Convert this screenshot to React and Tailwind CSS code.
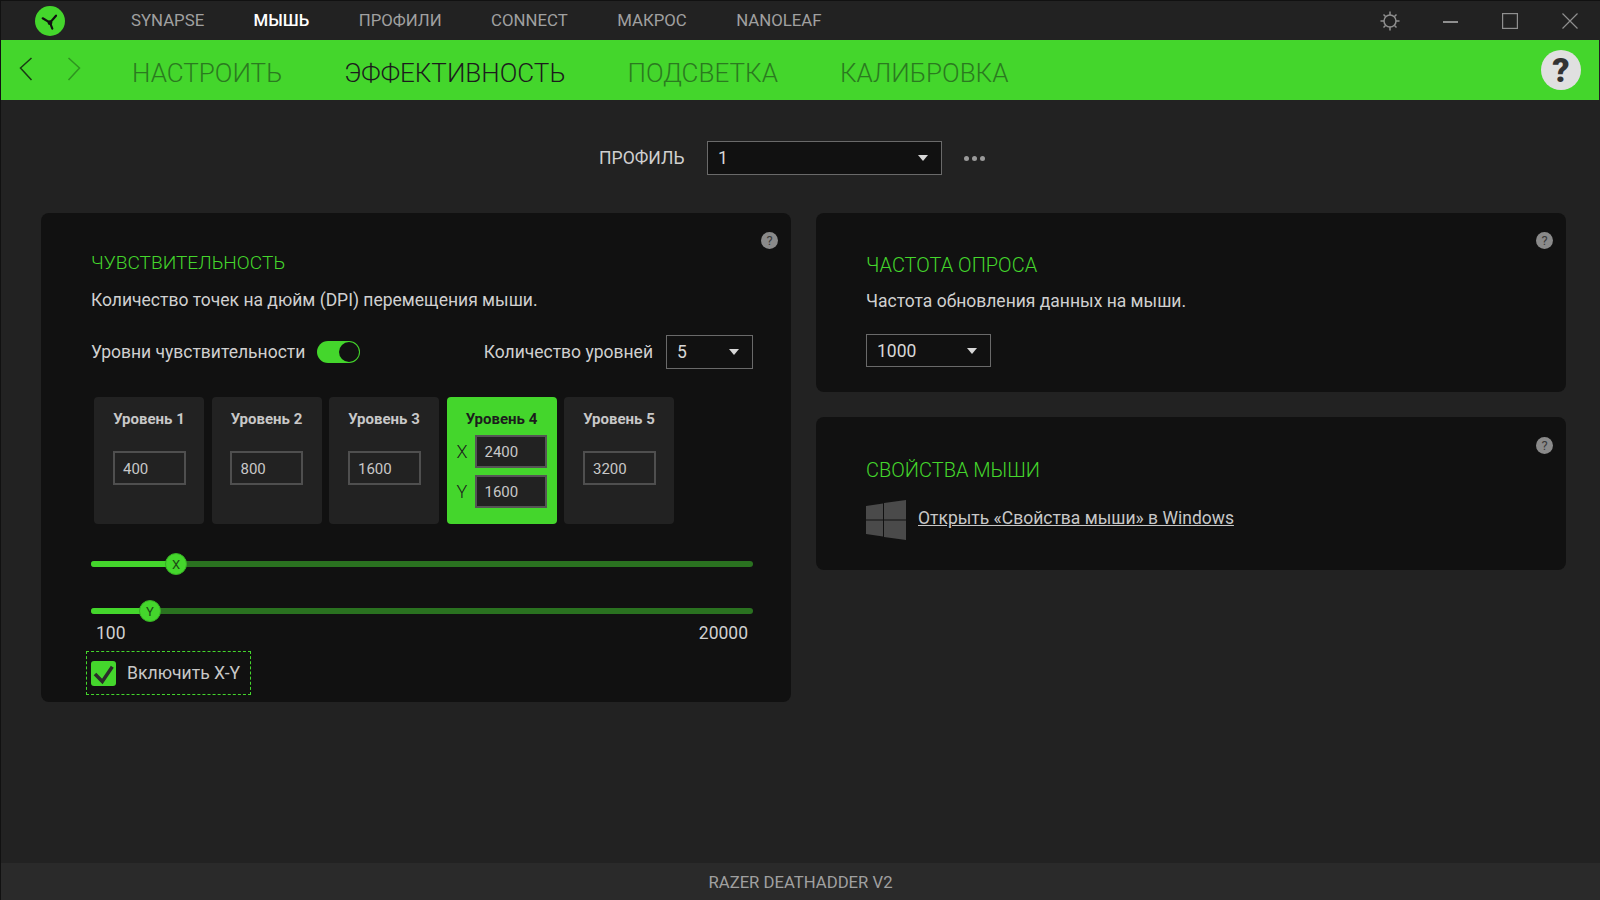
const NAV = ["SYNAPSE", "МЫШЬ", "ПРОФИЛИ", "CONNECT", "МАКРОС", "NANOLEAF"];
const SUB = ["НАСТРОИТЬ", "ЭФФЕКТИВНОСТЬ", "ПОДСВЕТКА", "КАЛИБРОВКА"];

function Caret({ className = "" }) {
  return (
    <svg width="10" height="6" viewBox="0 0 10 6" className={className}>
      <polygon points="0,0 10,0 5,6" fill="#d8d8d8" />
    </svg>
  );
}

function HelpDot({ className = "top-[19px]" }) {
  return (
    <span className={"absolute right-[13px] w-[17px] h-[17px] rounded-full bg-[#8a8a8a] text-[#3a3a3a] text-[13px] leading-[17px] text-center " + className}>
      ?
    </span>
  );
}

function Select({ value, className = "" }) {
  return (
    <div className={"flex items-center justify-between border border-[#6a6a6a] bg-[#111] text-[#d8d8d8] text-[17.5px] " + className}>
      <span className="pt-[1px]">{value}</span>
      <Caret />
    </div>
  );
}

function Level({ n, value }) {
  return (
    <div className="w-[110px] h-[127px] rounded-[4px] bg-[#222] flex flex-col items-center pt-[13px]">
      <div className="text-[15px] leading-[18px] font-bold text-[#c8c8c8]">Уровень {n}</div>
      <div className="mt-[23px] w-[73px] h-[34px] border-2 border-[#4f4f4f] text-[15px] leading-[32px] pl-[8.5px] text-[#c8c8c8]">{value}</div>
    </div>
  );
}

function XYInput({ label, value }) {
  return (
    <div className="flex items-center h-[33px]">
      <span className="w-[28px] pl-[10px] text-[18px] font-light text-[#1c1c1c]">{label}</span>
      <div className="w-[72px] h-[33px] bg-[#222] border-2 border-[#555] text-[15px] leading-[31px] pl-[8px] text-[#c8c8c8]">{value}</div>
    </div>
  );
}

function Slider({ letter, fill, className = "" }) {
  return (
    <div className={"relative h-[6px] rounded-full bg-[#2a7220] " + className}>
      <div className="h-[6px] rounded-full bg-[#44d62c]" style={{ width: fill }} />
      <div
        className="absolute top-[-8px] w-[22px] h-[22px] -ml-[11px] rounded-full bg-[#44d62c] border border-[#37b024] text-[#1c4a15] text-[13px] leading-[21px] text-center"
        style={{ left: fill }}
      >
        {letter}
      </div>
    </div>
  );
}

export default function App() {
  return (
    <div className="w-[1600px] h-[900px] overflow-hidden bg-[#222] text-[#d8d8d8] border-l border-t border-[#111] flex flex-col font-['Roboto',sans-serif]">
      <header className="h-[39px] flex items-center shrink-0">
        <svg width="30" height="30" viewBox="0 0 30 30" className="ml-[34px]">
          <circle cx="15" cy="15" r="15" fill="#44d62c" />
          <path d="M7.7 12.3L15 16.7L21 9.7M15 16.7L17.3 22.7" stroke="#111" strokeWidth="2.2" fill="none" strokeLinecap="round" />
          <circle cx="15" cy="16.7" r="2.4" fill="#111" />
        </svg>
        <nav className="ml-[66px] flex gap-[49.4px] text-[16.8px]">
          {NAV.map((n) => (
            <span key={n} className={n === "МЫШЬ" ? "text-white font-medium" : "text-[#a0a0a0]"}>{n}</span>
          ))}
        </nav>
        <div className="ml-auto flex items-center">
          <svg width="20" height="20" viewBox="0 0 20 20" fill="none" stroke="#8f8f8f" strokeWidth="1.5">
            <circle cx="10" cy="10" r="6" />
            <path d="M10 0.5V4M10 16V19.5M0.5 10H4M16 10H19.5M3.5 3.5L5.5 5.5M16.5 3.5L14.5 5.5M3.5 16.5L5.5 14.5M16.5 16.5L14.5 14.5" />
          </svg>
          <svg width="15" height="15" viewBox="0 0 15 15" className="ml-[43px]">
            <rect x="0" y="8" width="15" height="2" fill="#8f8f8f" />
          </svg>
          <svg width="16" height="16" viewBox="0 0 16 16" className="ml-[44px]" fill="none" stroke="#8f8f8f" strokeWidth="1.2">
            <rect x="0.6" y="0.6" width="14.8" height="14.8" />
          </svg>
          <svg width="16" height="16" viewBox="0 0 16 16" className="ml-[44px] mr-[22px]" fill="none" stroke="#8f8f8f" strokeWidth="1.2">
            <path d="M0.5 0.5L15.5 15.5M15.5 0.5L0.5 15.5" />
          </svg>
        </div>
      </header>

      <div className="h-[60px] shrink-0 bg-[#44d62c] mr-[1px] flex items-center">
        <svg width="14" height="24" viewBox="0 0 14 24" fill="none" stroke="#1a3a14" strokeWidth="1.5" className="ml-[18px] -mt-[2px]">
          <path d="M12.5 1L1.5 11L12.5 23" />
        </svg>
        <svg width="14" height="24" viewBox="0 0 14 24" fill="none" stroke="#2f9420" strokeWidth="1.5" className="ml-[34px] -mt-[2px]">
          <path d="M1.5 1L12.5 11L1.5 23" />
        </svg>
        <nav className="ml-[51px] pt-[7px] flex gap-[62px] text-[26px] font-light">
          {SUB.map((s) => (
            <span key={s} className={s === "ЭФФЕКТИВНОСТЬ" ? "text-[#1c1c1c]" : "text-[#2b7a20]"}>{s}</span>
          ))}
        </nav>
        <div className="ml-auto mr-[18px] -mt-[1px] w-[40px] h-[40px] rounded-full bg-[#e0e0e0] text-[#333] text-[34px] font-black leading-[40px] text-center">?</div>
      </div>

      <main className="flex-1 min-h-0 pt-[41px]">
        <div className="flex items-center h-[34px] pl-[598px]">
          <span className="w-[108px] text-[17.6px] text-[#d0d0d0]">ПРОФИЛЬ</span>
          <Select value="1" className="w-[235px] h-[34px] pl-[10px] pr-[13px]" />
          <div className="ml-[22px] flex gap-[3px]">
            <span className="w-[5px] h-[5px] rounded-full bg-[#9a9a9a]" />
            <span className="w-[5px] h-[5px] rounded-full bg-[#9a9a9a]" />
            <span className="w-[5px] h-[5px] rounded-full bg-[#9a9a9a]" />
          </div>
        </div>

        <div className="mt-[38px] ml-[40px] flex gap-[25px] items-start">
          <section className="relative w-[750px] h-[489px] rounded-[8px] bg-[#111] pl-[50px] pr-[38px] pt-[38px]">
            <HelpDot />
            <h2 className="text-[19.1px] leading-[24px] font-light text-[#44d62c]">ЧУВСТВИТЕЛЬНОСТЬ</h2>
            <p className="mt-[13px] text-[17.5px] leading-[24px] text-[#d0d0d0]">Количество точек на дюйм (DPI) перемещения мыши.</p>
            <div className="mt-[23px] h-[34px] flex items-center text-[17.5px] text-[#d0d0d0]">
              <span className="pt-[1px]">Уровни чувствительности</span>
              <div className="ml-[12px] w-[43px] h-[22px] rounded-full bg-[#44d62c] flex justify-end p-[1px]">
                <div className="w-[20px] h-[20px] rounded-full bg-[#111]" />
              </div>
              <span className="ml-auto mr-[13px] pt-[1px]">Количество уровней</span>
              <Select value="5" className="w-[87px] h-[34px] pl-[10px] pr-[13px]" />
            </div>
            <div className="mt-[28px] ml-[3px] flex gap-[7.5px]">
              <Level n={1} value="400" />
              <Level n={2} value="800" />
              <Level n={3} value="1600" />
              <div className="w-[110px] h-[127px] rounded-[4px] bg-[#44d62c] flex flex-col pt-[13px]">
                <div className="text-[15px] leading-[18px] font-bold text-[#1c1c1c] text-center">Уровень 4</div>
                <div className="mt-[7px] flex flex-col gap-[7px]">
                  <XYInput label="X" value="2400" />
                  <XYInput label="Y" value="1600" />
                </div>
              </div>
              <Level n={5} value="3200" />
            </div>
            <Slider letter="X" fill={85} className="mt-[37px]" />
            <Slider letter="Y" fill={59} className="mt-[41px]" />
            <div className="mt-[7px] flex justify-between px-[5px] text-[17.5px] leading-[24px] text-[#d0d0d0]">
              <span>100</span>
              <span>20000</span>
            </div>
            <div className="mt-[6px] -ml-[5px] w-[165px] h-[44px] border border-dashed border-[#44d62c] flex items-center pl-[4px]">
              <div className="w-[25px] h-[25px] rounded-[3px] bg-[#44d62c]">
                <svg width="25" height="25" viewBox="0 0 25 25" fill="none" stroke="#2b2b2b" strokeWidth="3.5">
                  <path d="M4 13L11.3 20.5L21.3 5.7" />
                </svg>
              </div>
              <span className="ml-[11px] text-[17.6px] text-[#c8c8c8]">Включить X-Y</span>
            </div>
          </section>

          <div className="flex flex-col gap-[25px]">
            <section className="relative w-[750px] h-[179px] rounded-[8px] bg-[#111] pl-[50px] pt-[40px]">
              <HelpDot />
              <h2 className="text-[20px] leading-[24px] font-light text-[#44d62c]">ЧАСТОТА ОПРОСА</h2>
              <p className="mt-[12px] text-[17.5px] leading-[24px] text-[#d0d0d0]">Частота обновления данных на мыши.</p>
              <Select value="1000" className="mt-[21px] w-[125px] h-[33px] pl-[10px] pr-[13px]" />
            </section>
            <section className="relative w-[750px] h-[153px] rounded-[8px] bg-[#111] pl-[50px] pt-[41px]">
              <HelpDot className="top-[20px]" />
              <h2 className="text-[20px] leading-[24px] font-light text-[#44d62c]">СВОЙСТВА МЫШИ</h2>
              <div className="mt-[18px] flex items-center">
                <svg width="40" height="40" viewBox="0 0 40 40" fill="#4a4a4a">
                  <polygon points="0,6 17,3.5 17,19.5 0,19.5" />
                  <polygon points="18,3 40,0 40,19.5 18,19.5" />
                  <polygon points="0,20.5 17,20.5 17,36.5 0,34" />
                  <polygon points="18,20.5 40,20.5 40,40 18,37" />
                </svg>
                <a className="ml-[12px] -mt-[4px] text-[17.5px] underline text-[#c8c8c8]">Открыть «Свойства мыши» в Windows</a>
              </div>
            </section>
          </div>
        </div>
      </main>

      <footer className="h-[37px] shrink-0 bg-[#2a2a2a] text-center text-[16.7px] leading-[39px] text-[#a0a0a0]">RAZER DEATHADDER V2</footer>
    </div>
  );
}
